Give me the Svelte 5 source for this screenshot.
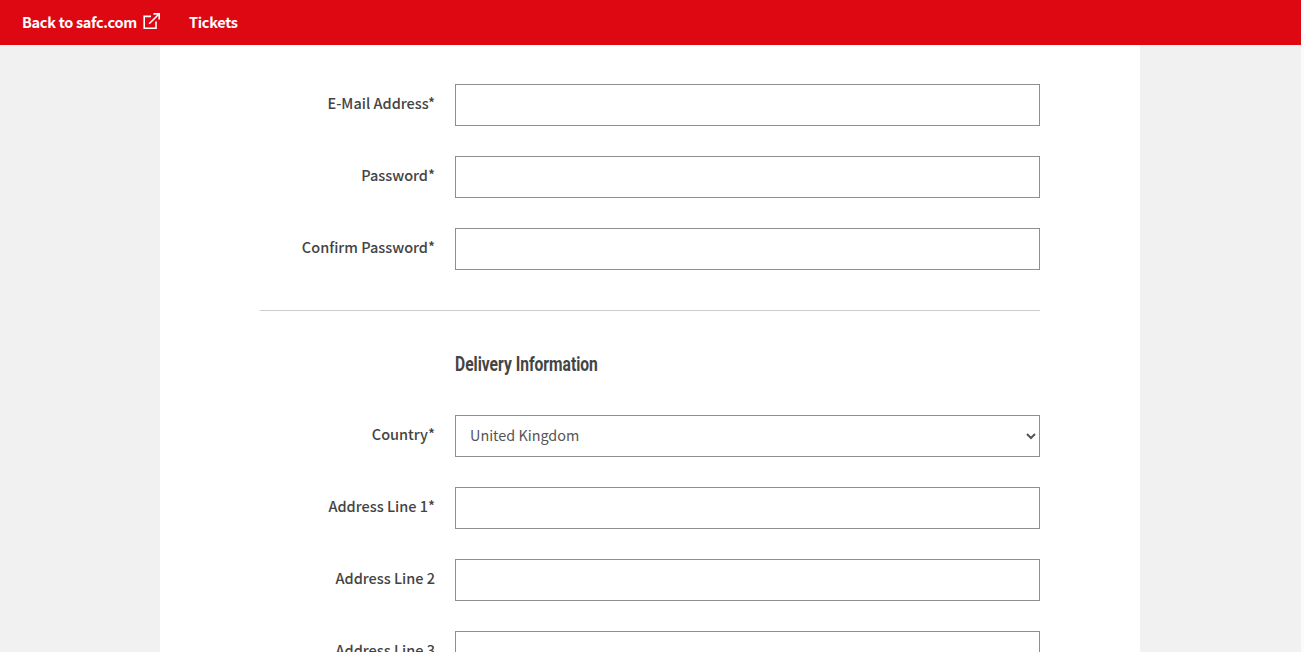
<script>
  const topFields = [
    { label: "E-Mail Address*" },
    { label: "Password*" },
    { label: "Confirm Password*" },
  ];
  const addressFields = [
    { label: "Address Line 1*" },
    { label: "Address Line 2" },
    { label: "Address Line 3" },
  ];
</script>

<div class="page">
  <nav class="topbar">
    <a class="nav-link" href="#back">
      Back to safc.com
      <svg class="ext" viewBox="0 0 17 17" width="17" height="17" fill="none" stroke="#fff" stroke-width="1.6">
        <path d="M13 8.5v6.7H1.2V3.4H8" />
        <path d="M6.2 10.8 16 1" />
        <path d="M10.5.9h5.7v5.7" />
      </svg>
    </a>
    <a class="nav-link" href="#tickets">Tickets</a>
  </nav>

  <main class="sheet">
    <form class="form">
      {#each topFields as f}
        <div class="row">
          <label class="label" for={f.label}>{f.label}</label>
          <input class="control" id={f.label} type="text" />
        </div>
      {/each}

      <hr class="rule" />

      <div class="row heading-row">
        <span class="label"></span>
        <h2 class="heading">Delivery Information</h2>
      </div>

      <div class="row">
        <label class="label" for="country">Country*</label>
        <select class="control select" id="country">
          <option>United Kingdom</option>
        </select>
      </div>

      {#each addressFields as f}
        <div class="row">
          <label class="label" for={f.label}>{f.label}</label>
          <input class="control" id={f.label} type="text" />
        </div>
      {/each}
    </form>
  </main>
</div>

<style>
  :global(body) {
    margin: 0;
    background: #fbfbfb;
    overflow: hidden;
  }
  .page {
    width: 1301px;
    height: 652px;
    overflow: hidden;
    background: #f1f1f1;
    font-family: "Noto Sans CJK JP", "Noto Sans", sans-serif;
    color: #444;
  }
  .topbar {
    height: 45px;
    background: #de0813;
    display: flex;
    align-items: center;
    gap: 29px;
    padding-left: 22px;
  }
  .nav-link {
    display: flex;
    align-items: center;
    gap: 6px;
    color: #fff;
    font-size: 14.5px;
    letter-spacing: -0.3px;
    font-weight: 700;
    text-decoration: none;
    margin-top: -2px;
  }
  .ext {
    margin-top: -1px;
  }
  .sheet {
    width: 980px;
    margin-left: 160px;
    background: #fff;
    padding: 39px 100px 0;
    box-sizing: border-box;
  }
  .form {
    display: flex;
    flex-direction: column;
    gap: 30px;
  }
  .row {
    display: grid;
    grid-template-columns: 175px 585px;
    column-gap: 20px;
    align-items: center;
  }
  .label {
    text-align: right;
    font-size: 14.5px;
    font-weight: 500;
    color: #444;
    margin-top: -5px;
  }
  .control {
    height: 42px;
    box-sizing: border-box;
    border: 1px solid #8e8e8e;
    border-radius: 0;
    background: #fff;
    padding: 0 14px;
    font: inherit;
    font-size: 14.4px;
    color: #555;
    margin: 0;
    width: 100%;
  }
  .select {
    padding: 0 0 4px 10px;
  }
  .rule {
    border: 0;
    border-top: 1px solid #ccc;
    margin: 10px 0 0;
  }
  .heading-row {
    height: 44px;
  }
  .heading {
    margin: 0;
    padding-top: 2px;
    font-family: Roboto, sans-serif;
    font-size: 20px;
    font-weight: 700;
    color: #444;
    line-height: 42px;
    white-space: nowrap;
    transform: scaleX(0.78);
    transform-origin: left center;
  }
</style>
